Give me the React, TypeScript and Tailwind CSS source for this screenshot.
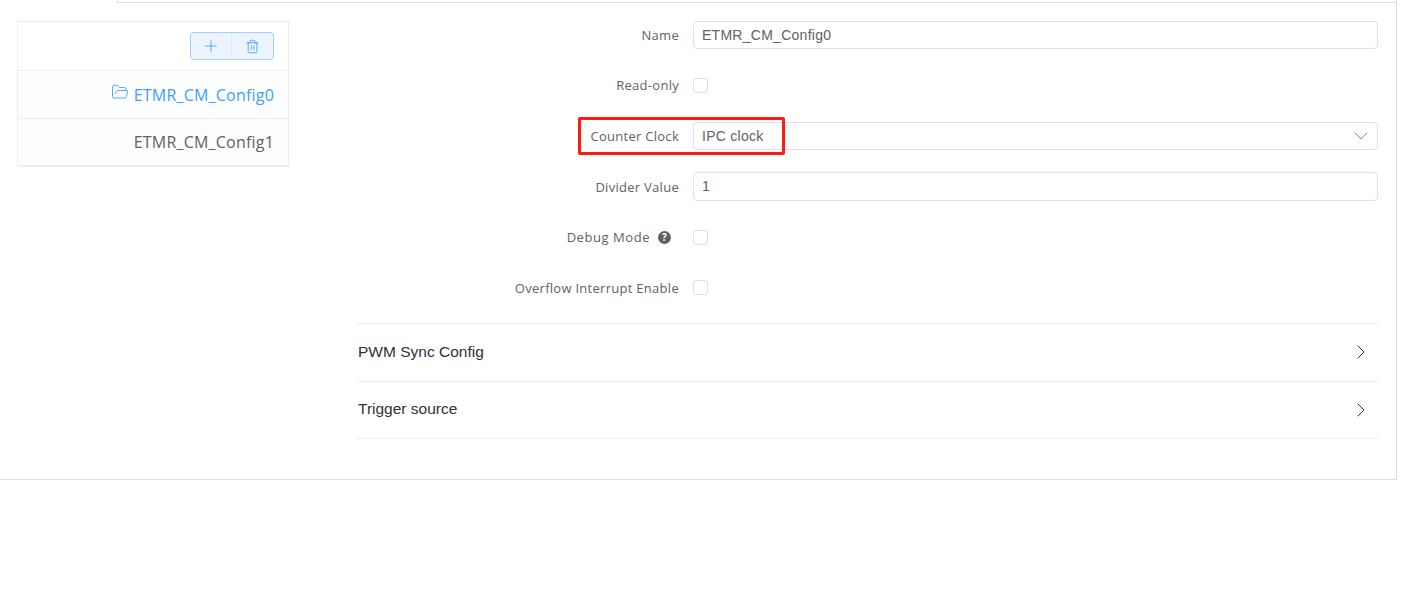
import { Plus, Trash2, FolderOpen, ChevronDown, ChevronRight } from 'lucide-react'

const font = { sans: "font-['Open_Sans','Noto_Sans',sans-serif]" }
const valueFont = "font-['Liberation_Sans',sans-serif] text-[14px] tracking-[0.27px] text-[#606266]"

function Label({ text, help }: { text: string; help?: boolean }) {
  return (
    <div className={`w-[336px] pr-[14px] flex items-center justify-end text-[13px] text-[#606266] tracking-[0.28px] ${help ? '' : 'pt-[1px]'}`}>
      <span className={help ? 'tracking-[0.55px]' : ''}>{text}</span>
      {help && (
        <span className="ml-[8px] mr-[8px] w-[13px] h-[13px] rounded-full bg-[#5f6064] text-white text-[10px] font-bold flex items-center justify-center">
          ?
        </span>
      )}
    </div>
  )
}

function TextRow({ label, value }: { label: string; value: string }) {
  return (
    <div className="flex h-[28.6px]">
      <Label text={label} />
      <div className={`flex-1 border border-[#dcdfe6] rounded-[4px] px-[8px] flex items-center ${valueFont}`}>
        {value}
      </div>
    </div>
  )
}

function CheckRow({ label, help }: { label: string; help?: boolean }) {
  return (
    <div className="flex h-[28.6px]">
      <Label text={label} help={help} />
      <div className="flex items-center">
        <div className="w-[15px] h-[15px] border border-[#dcdfe6] rounded-[3px] bg-white" />
      </div>
    </div>
  )
}

function SelectRow({ label, value }: { label: string; value: string }) {
  return (
    <div className="flex h-[28.6px]">
      <Label text={label} />
      <div className={`flex-1 border border-[#dcdfe6] rounded-[4px] pl-[8px] pr-[4px] flex items-center justify-between ${valueFont}`}>
        {value}
        <ChevronDown size={24} strokeWidth={1} className="text-[#8a8c91]" />
      </div>
    </div>
  )
}

function Section({ title, height }: { title: string; height: string }) {
  return (
    <div className={`${height} border-b border-[#ebeef5] flex items-center justify-between pl-[1px] pr-[5px] font-['Liberation_Sans',sans-serif] text-[15.5px] text-[#303133]`}>
      <span className="-mt-[1px]">{title}</span>
      <ChevronRight size={24} strokeWidth={1} className="text-[#303133]" />
    </div>
  )
}

export default function App() {
  return (
    <div className={`relative h-[603px] w-[1418px] bg-white overflow-hidden ${font.sans}`}>
      <div className="w-[1397px] h-[480px] border-r border-b border-[#dcdfe6]">
        <div className="ml-[117px] h-[3px] border-l border-b border-[#dcdfe6]" />
        <div className="flex pt-[18px] pl-[17px] pr-[18px]">
          <div className="w-[272px] h-[146px] border border-b-2 border-[#ebeef5]">
            <div className="h-[49px] border-b border-[#ebeef5] flex items-center justify-end pr-[14px]">
              <div className="flex h-[28px] w-[84px] border border-[#a3d0fd] rounded-[4px] bg-[#ecf5ff] text-[#409eff]">
                <div className="w-[41px] border-r border-[#d9ecff] flex items-center justify-center">
                  <Plus size={18} strokeWidth={1.2} />
                </div>
                <div className="flex-1 flex items-center justify-center">
                  <Trash2 size={15} strokeWidth={1.4} />
                </div>
              </div>
            </div>
            <div className="h-[48px] border-b border-[#ebeef5] bg-[#fdfeff] flex items-center justify-end pr-[14px] text-[16px] tracking-[0.2px] text-[#409eff]">
              <FolderOpen size={18} strokeWidth={1.2} className="mr-[5px] mb-[5px]" />
              ETMR_CM_Config0
            </div>
            <div className="h-[46px] bg-[#fdfdfd] flex items-center justify-end pr-[14px] text-[16px] tracking-[0.2px] text-[#606266]">
              ETMR_CM_Config1
            </div>
          </div>
          <div className="flex-1 ml-[68px]">
            <div className="flex flex-col gap-[22px] -mt-[0.3px]">
              <TextRow label="Name" value="ETMR_CM_Config0" />
              <CheckRow label="Read-only" />
              <SelectRow label="Counter Clock" value="IPC clock" />
              <TextRow label="Divider Value" value="1" />
              <CheckRow label="Debug Mode" help />
              <CheckRow label="Overflow Interrupt Enable" />
            </div>
            <div className="mt-[20.3px] border-t border-[#ebeef5]">
              <Section title="PWM Sync Config" height="h-[58px]" />
              <Section title="Trigger source" height="h-[57px]" />
            </div>
          </div>
        </div>
      </div>
      <div className="absolute left-[578px] top-[117px] w-[207px] h-[38px] border-[3px] border-[#ff1a12] rounded-[2px]" />
    </div>
  )
}
